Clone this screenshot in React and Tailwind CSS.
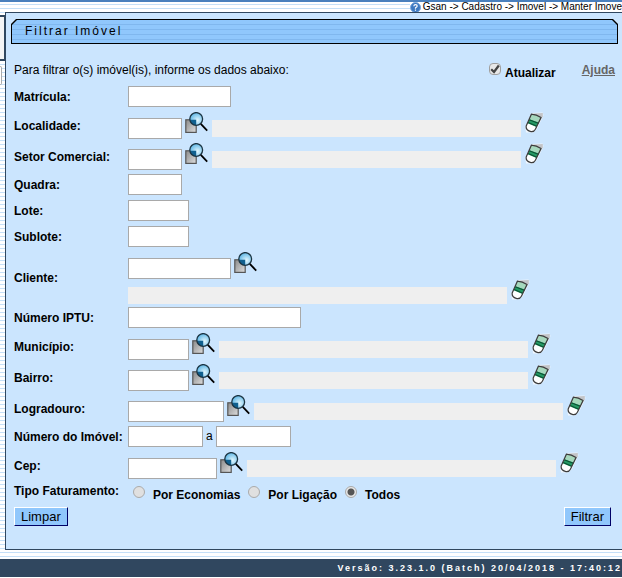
import {useState} from "react";
import clsx from "clsx";

const BILLING_TYPES = ["Por Economias", "Por Ligação", "Todos"];

const SearchIcon = () => (
  <svg width="24" height="22" viewBox="0 0 24 22" aria-hidden="true">
    <defs>
      <linearGradient id="page" x1="0" y1="0" x2="1" y2="1">
        <stop offset="0" stopColor="#8a8a8a" />
        <stop offset="1" stopColor="#dedede" />
      </linearGradient>
      <radialGradient id="lens" cx="0.6" cy="0.6" r="0.6">
        <stop offset="0" stopColor="#e4f8ff" />
        <stop offset="1" stopColor="#62b8e6" />
      </radialGradient>
    </defs>
    <rect x="0.8" y="7.8" width="10.4" height="12.6" fill="url(#page)" stroke="#555" strokeWidth="1.2" />
    <circle cx="11.2" cy="7" r="6.4" fill="url(#lens)" />
    <path d="M4.9 7.8H11.2V13.4A6.4 6.4 0 0 1 4.9 7.8Z" fill="#10608f" />
    <circle cx="11.2" cy="7" r="6.4" fill="none" stroke="#1c3442" strokeWidth="1.3" />
    <path d="M15.8 11.8L22.2 18.6" stroke="#000" strokeWidth="1.8" />
  </svg>
);

const EraserIcon = () => (
  <svg width="19" height="21" viewBox="0 0 19 21" aria-hidden="true">
    <path d="M7 1L17.5 0.5L18.5 3L12 17L8 20.5H1L0.3 14Z" fill="#fff" opacity="0.7" />
    <path d="M8.5 1.5L17.8 1V4.5L13 11Z" fill="#c2c4c8" />
    <path d="M6.4 2.2Q11.5 2.4 16 5.6L10.4 17.2Q8.8 20.3 5.2 19.3Q0.6 18 1.2 14Z" fill="#fff" />
    <path d="M6.4 2.2Q11.5 2.4 16 5.6L13 11.5L4 8Z" fill="#a6d8bd" />
    <path d="M4.4 7.3L13.8 10.4L11.5 15L2.6 11.3Z" fill="#249a64" />
    <path d="M4.2 7.8L13.2 11.3M3.2 10.6L11.8 14.2" stroke="#0b5133" strokeWidth="1.1" />
    <path
      d="M6.4 2.2Q11.5 2.4 16 5.6L10.4 17.2Q8.8 20.3 5.2 19.3Q0.6 18 1.2 14Z"
      fill="none"
      stroke="#3c3c3c"
      strokeWidth="1.2"
    />
  </svg>
);

const HelpIcon = () => (
  <svg width="11" height="11" viewBox="0 0 11 11" aria-hidden="true">
    <circle cx="5.5" cy="5.5" r="5" fill="#3c78c0" stroke="#7da9dc" />
    <path d="M3.8 4.2Q4 2.6 5.5 2.6Q7.2 2.6 7.2 4Q7.2 5 5.5 5.8V6.7M5.5 7.6V8.8" fill="none" stroke="#fff" strokeWidth="1.2" />
  </svg>
);

function TextBox({className, ...props}) {
  return <input type="text" className={clsx("h-[21px] shrink-0 border border-[#a9a9a9] bg-white px-1", className)} {...props} />;
}

// Read-only description box with its clear button
function Description({label, className}) {
  return (
    <div className="flex items-start gap-1">
      <input
        readOnly
        aria-label={`Descrição ${label}`}
        className={clsx("mt-2 h-[17px] shrink-0 bg-[#efefef] px-1 outline-none", className)}
      />
      <button type="button" aria-label={`Limpar ${label}`} className="shrink-0">
        <EraserIcon />
      </button>
    </div>
  );
}

function Row({id, label, className = "h-[26px]", children}) {
  return (
    <div className={clsx("flex", className)}>
      <label htmlFor={id} className="flex w-[114px] shrink-0 items-center whitespace-nowrap pb-1 font-bold">
        {label}:
      </label>
      {children}
    </div>
  );
}

function SearchField({id, label, width}) {
  return (
    <div className="flex items-start gap-[3px]">
      <TextBox id={id} className={clsx("mt-[6px]", width)} />
      <button type="button" aria-label={`Pesquisar ${label}`} className="shrink-0">
        <SearchIcon />
      </button>
    </div>
  );
}

function SearchRow({id, label, width}) {
  return (
    <Row id={id} label={label} className="h-[31px]">
      <div className="flex items-start gap-[3px]">
        <SearchField id={id} label={label} width={width} />
        <Description label={label} className="w-[309px]" />
      </div>
    </Row>
  );
}

function ActionButton({children}) {
  return (
    <button
      type="button"
      className="h-[19px] border border-t-white border-l-white border-r-[#000066] border-b-[#000066] bg-[#90c7fc] px-[6px] text-[13px] leading-4"
    >
      {children}
    </button>
  );
}

export default function App() {
  const [update, setUpdate] = useState(true);
  const [billing, setBilling] = useState("Todos");

  return (
    <div className="overflow-hidden bg-[repeating-linear-gradient(to_bottom,#c6e0f8_0_1px,#fff_1px_4px)] font-['Liberation_Sans',Arial,sans-serif] text-xs text-black">
      <header className="flex h-3 justify-end border-t-2 border-[#4a80bd]">
        <div className="flex items-center gap-[2px] whitespace-nowrap bg-white text-[10px] leading-[10px]">
          <HelpIcon />
          <span>Gsan -&gt; Cadastro -&gt; Imovel -&gt; Manter Imove</span>
        </div>
      </header>

      <div className="flex">
        <aside className="w-[5px] shrink-0 pt-[3px]">
          <div className="h-[46px] border-y-2 border-r border-[#30475f] bg-[#f4f4f4]" />
          <div className="mt-[5px] mr-[3px] h-[19px] rounded-r border border-l-0 border-[#aaa] bg-white" />
        </aside>

        <main className="min-w-0 grow border-y border-l border-[#30475f] bg-[#cbe5fe] pb-[23px]">
          <div className="mt-[6px] mr-1 ml-[5px] bg-black p-[1px] [clip-path:polygon(5px_0,calc(100%-5px)_0,100%_5px,100%_100%,0_100%,0_5px)]">
            <h1 className="h-[23px] bg-[repeating-linear-gradient(to_bottom,#90c7fc_0_4px,#80b7ee_4px_5px)] pl-[13px] leading-[22px] tracking-[2px] [clip-path:polygon(5px_0,calc(100%-5px)_0,100%_5px,100%_100%,0_100%,0_5px)]">
              Filtrar Imóvel
            </h1>
          </div>

          <form className="pl-2" onSubmit={(e) => e.preventDefault()}>
            <div className="flex h-[42px] items-center pt-[10px] pr-[7px]">
              <p className="grow">Para filtrar o(s) imóvel(is), informe os dados abaixo:</p>
              <label className="mr-[26px] flex items-start gap-1 pt-1 font-bold">
                <input
                  type="checkbox"
                  checked={update}
                  onChange={(e) => setUpdate(e.target.checked)}
                  className="peer sr-only"
                />
                <span className="flex size-3 items-center justify-center rounded-sm border border-[#a0a0a0] bg-[#e8e8e8] text-transparent peer-checked:text-[#444]">
                  <svg width="10" height="10" viewBox="0 0 10 10" fill="none" stroke="currentColor" strokeWidth="2.2">
                    <path d="M1.2 5.2L4 8L8.8 1.5" />
                  </svg>
                </span>
                <span className="pt-[2px]">Atualizar</span>
              </label>
              <a href="#ajuda" className="font-bold text-[#666] underline">Ajuda</a>
            </div>

            <Row id="matricula" label="Matrícula"><TextBox id="matricula" className="w-[103px]" /></Row>
            <SearchRow id="localidade" label="Localidade" width="w-[54px]" />
            <SearchRow id="setor" label="Setor Comercial" width="w-[54px]" />
            <Row id="quadra" label="Quadra"><TextBox id="quadra" className="w-[54px]" /></Row>
            <Row id="lote" label="Lote"><TextBox id="lote" className="w-[61px]" /></Row>
            <Row id="sublote" label="Sublote"><TextBox id="sublote" className="w-[61px]" /></Row>
            <Row id="cliente" label="Cliente" className="h-[55px]">
              <div className="flex flex-col">
                <SearchField id="cliente" label="Cliente" width="w-[103px]" />
                <Description label="Cliente" className="w-[379px]" />
              </div>
            </Row>
            <Row id="iptu" label="Número IPTU"><TextBox id="iptu" className="w-[173px]" /></Row>
            <SearchRow id="municipio" label="Município" width="w-[61px]" />
            <SearchRow id="bairro" label="Bairro" width="w-[61px]" />
            <SearchRow id="logradouro" label="Logradouro" width="w-[96px]" />
            <Row id="numero" label="Número do Imóvel">
              <div className="flex items-start gap-[3px] leading-5">
                <TextBox id="numero" className="w-[75px]" />
                <span>a</span>
                <TextBox aria-label="Número final" className="w-[75px]" />
              </div>
            </Row>
            <SearchRow id="cep" label="Cep" width="w-[89px]" />

            <fieldset className="flex h-6">
              <legend className="float-left w-[119px] font-bold">Tipo Faturamento:</legend>
              {BILLING_TYPES.map((type) => (
                <label key={type} className="mr-2 flex items-start gap-2 font-bold">
                  <input
                    type="radio"
                    name="billing"
                    checked={billing === type}
                    onChange={() => setBilling(type)}
                    className="mt-[3px] size-3 appearance-none rounded-full border border-[#aaa] bg-[#e0e0e0] checked:bg-[radial-gradient(circle,#555_3px,#e8e8e8_4px)]"
                  />
                  <span className="pt-1">{type}</span>
                </label>
              ))}
            </fieldset>

            <div className="flex justify-between pr-[11px]">
              <ActionButton>Limpar</ActionButton>
              <ActionButton>Filtrar</ActionButton>
            </div>
          </form>
        </main>
      </div>

      <footer className="mt-[9px] mb-[1px] h-[18px] bg-[#30475f] text-right text-[9px] leading-[18px] font-bold tracking-[2px] text-white">
        Versão: 3.23.1.0 (Batch) 20/04/2018 - 17:40:12
      </footer>
    </div>
  );
}
